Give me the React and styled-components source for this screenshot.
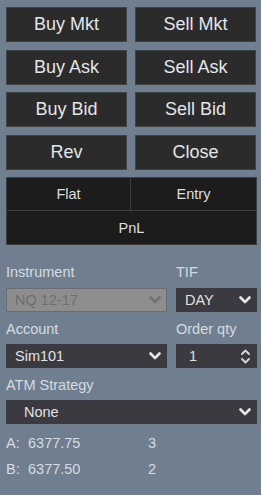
import { Fragment } from 'react';
import styled, { createGlobalStyle } from 'styled-components';

const GlobalStyle = createGlobalStyle`
    html, body {
        margin: 0;
        padding: 0;
        background: #6f7f8f;
    }
    body {
        font-family: "Liberation Sans", Arial, sans-serif;
    }
`

const Page = styled.div`
    width: 261px;
    height: 495px;
    box-sizing: border-box;
    padding: 7px 4px 0 6px;
    background: #6f7f8f;
    display: flex;
    flex-direction: column;
`

const ButtonGrid = styled.div`
    display: grid;
    grid-template-columns: 121px 121px;
    grid-auto-rows: 35px;
    column-gap: 8px;
    row-gap: 7.7px;
`

const OrderButton = styled.div`
    box-sizing: border-box;
    background: #2b2b2c;
    border: 1px solid #414244;
    color: #e2e5e9;
    font-size: 18px;
    display: flex;
    align-items: center;
    justify-content: center;
`

const InfoPanel = styled.div`
    margin-top: 7px;
    width: 251px;
    box-sizing: border-box;
    border: 1px solid #3d3e40;
    background: #1c1c1c;
    display: grid;
    grid-template-columns: 124px 1fr;
    grid-auto-rows: 33px;
`

const InfoCell = styled.div`
    display: flex;
    align-items: center;
    justify-content: center;
    color: #dedede;
    font-size: 14.5px;
    grid-column: ${p => (p.wide ? '1 / 3' : 'auto')};
    border-right: ${p => (p.divider ? '1px solid #3d3e40' : 'none')};
    border-bottom: ${p => (p.top ? '1px solid #3d3e40' : 'none')};
`

const Form = styled.div`
    margin-top: 15px;
    width: 251px;
    display: grid;
    grid-template-columns: 161px 81px;
    column-gap: 9px;
    grid-template-rows: 24px 24px 24px 24px 24px 24px;
    row-gap: 4px;
`

const Label = styled.div`
    color: #d5dbe1;
    font-size: 14.5px;
    display: flex;
    align-items: center;
    grid-column: ${p => (p.wide ? '1 / 3' : 'auto')};
    margin-top: ${p => (p.spaced ? '1px' : '0')};
`

const Select = styled.div`
    box-sizing: border-box;
    height: 24px;
    display: flex;
    align-items: center;
    justify-content: space-between;
    padding: 0 5px 0 ${p => p.indent || 8}px;
    font-size: 14.5px;
    grid-column: ${p => (p.wide ? '1 / 3' : 'auto')};
    background: ${p => (p.disabled ? '#8d8d8e' : '#3b3a40')};
    border: 1px solid ${p => (p.disabled ? '#6c6c6e' : '#3b3a40')};
    color: ${p => (p.disabled ? '#6e6e70' : '#e2e2e2')};
`

const Quotes = styled.div`
    margin-top: 6px;
    display: grid;
    grid-template-columns: 22px 120px auto;
    grid-auto-rows: 26px;
    color: #d5dbe1;
    font-size: 14.5px;
    align-items: center;
`

const Spinner = styled.div`
    display: flex;
    flex-direction: column;
    gap: 3px;
    margin-right: 1px;
`

function Chevron({ color }) {
    return (
        <svg width="12" height="8" viewBox="0 0 12 8">
            <polyline points="1.5,1.5 6,6 10.5,1.5" fill="none" stroke={color} strokeWidth="2.6" strokeLinecap="round" strokeLinejoin="round" />
        </svg>
    )
}

function Arrow({ up }) {
    return (
        <svg width="9" height="6" viewBox="0 0 9 6">
            <polyline points={up ? '1,5 4.5,1.5 8,5' : '1,1 4.5,4.5 8,1'} fill="none" stroke="#d8d8d8" strokeWidth="1.8" strokeLinecap="round" strokeLinejoin="round" />
        </svg>
    )
}

const buttons = ['Buy Mkt', 'Sell Mkt', 'Buy Ask', 'Sell Ask', 'Buy Bid', 'Sell Bid', 'Rev', 'Close'];

const quotes = [
    { side: 'A:', price: '6377.75', size: '3' },
    { side: 'B:', price: '6377.50', size: '2' },
];

export default function App() {
    return (
        <Page>
            <GlobalStyle />
            <ButtonGrid>
                {buttons.map((b) => (
                    <OrderButton key={b}>{b}</OrderButton>
                ))}
            </ButtonGrid>
            <InfoPanel>
                <InfoCell top divider>Flat</InfoCell>
                <InfoCell top>Entry</InfoCell>
                <InfoCell wide>PnL</InfoCell>
            </InfoPanel>
            <Form>
                <Label>Instrument</Label>
                <Label>TIF</Label>
                <Select disabled>
                    <span>NQ 12-17</span>
                    <Chevron color="#727274" />
                </Select>
                <Select>
                    <span>DAY</span>
                    <Chevron color="#e8e8e8" />
                </Select>
                <Label spaced>Account</Label>
                <Label spaced>Order qty</Label>
                <Select>
                    <span>Sim101</span>
                    <Chevron color="#e8e8e8" />
                </Select>
                <Select indent={12}>
                    <span>1</span>
                    <Spinner>
                        <Arrow up />
                        <Arrow />
                    </Spinner>
                </Select>
                <Label wide spaced>ATM Strategy</Label>
                <Select wide indent={17}>
                    <span>None</span>
                    <Chevron color="#e8e8e8" />
                </Select>
            </Form>
            <Quotes>
                {quotes.map((q) => (
                    <Fragment key={q.side}>
                        <span>{q.side}</span>
                        <span>{q.price}</span>
                        <span>{q.size}</span>
                    </Fragment>
                ))}
            </Quotes>
        </Page>
    )
}
